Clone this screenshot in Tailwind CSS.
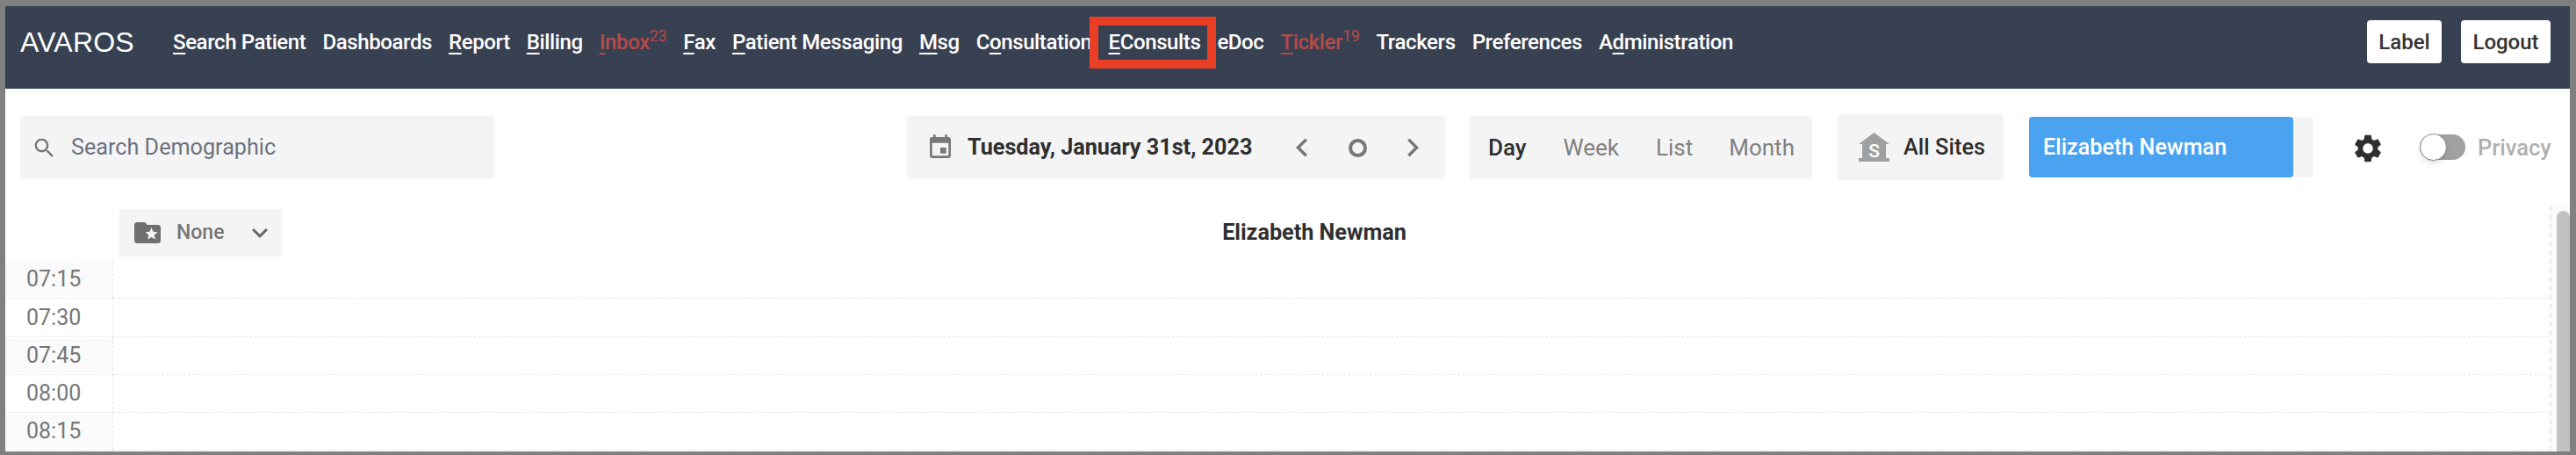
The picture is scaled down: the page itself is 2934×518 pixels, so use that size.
<!doctype html>
<html>
<head>
<meta charset="utf-8">
<script src="https://cdn.jsdelivr.net/npm/@tailwindcss/browser@4"></script>
</head>
<body class="m-0 overflow-hidden bg-[#808080] font-['Roboto',sans-serif]">
<div class="h-[518px] w-[2934px] pt-[7px] pr-[7px] pb-[4px] pl-[6px]">
<div class="flex h-full flex-col overflow-hidden bg-white">
  <header class="relative flex h-[94px] shrink-0 items-center bg-[#384152] pb-[13px] pl-[17px] pr-[22px] text-white">
    <span class="mr-[44px] w-[130px] font-['Liberation_Sans',sans-serif] text-[32px] leading-none tracking-[0.2px]">AVAROS</span>
    <nav class="flex gap-[19px] text-[24px] font-medium leading-none tracking-[-0.39px]">
      <a class="whitespace-nowrap"><u class="underline-offset-4">S</u>earch Patient</a>
      <a class="whitespace-nowrap">Dashboards</a>
      <a class="whitespace-nowrap"><u class="underline-offset-4">R</u>eport</a>
      <a class="whitespace-nowrap"><u class="underline-offset-4">B</u>illing</a>
      <a class="whitespace-nowrap text-[#b84a4a]"><u class="underline-offset-4">I</u>nbox<sup class="text-[18px] font-normal">23</sup></a>
      <a class="whitespace-nowrap"><u class="underline-offset-4">F</u>ax</a>
      <a class="whitespace-nowrap"><u class="underline-offset-4">P</u>atient Messaging</a>
      <a class="whitespace-nowrap"><u class="underline-offset-4">M</u>sg</a>
      <a class="whitespace-nowrap">C<u class="underline-offset-4">o</u>nsultation</a>
      <a class="whitespace-nowrap"><u class="underline-offset-4">E</u>Consults</a>
      <a class="whitespace-nowrap">eDoc</a>
      <a class="whitespace-nowrap text-[#b84a4a]"><u class="underline-offset-4">T</u>ickler<sup class="text-[18px] font-normal">19</sup></a>
      <a class="whitespace-nowrap">Trackers</a>
      <a class="whitespace-nowrap">Preferences</a>
      <a class="whitespace-nowrap">A<u class="underline-offset-4">d</u>ministration</a>
    </nav>
    <div class="ml-auto flex gap-[22px] text-[24px] font-medium text-[#333]">
      <button class="h-[49px] w-[85px] rounded-[4px] bg-white">Label</button>
      <button class="h-[49px] w-[102px] rounded-[4px] bg-white">Logout</button>
    </div>
    <div class="absolute left-[1235px] top-[12px] h-[59px] w-[144px] border-[10px] border-[#ea3f24]"></div>
  </header>

  <div class="flex h-[133px] shrink-0 items-start pl-[17px] pt-[31px]">
    <div class="flex h-[72px] w-[540px] items-center rounded-[4px] bg-[#f4f4f4] pl-[13px] text-[25.2px] text-[#6b7280]">
      <svg class="h-[29px] w-[29px] fill-[#777]" viewBox="0 0 24 24"><path d="M15.5 14h-.79l-.28-.27C15.41 12.59 16 11.11 16 9.5 16 5.91 13.09 3 9.5 3S3 5.91 3 9.5 5.91 16 9.5 16c1.61 0 3.09-.59 4.23-1.57l.27.28v.79l5 4.99L20.49 19l-4.99-5zm-6 0C7.01 14 5 11.99 5 9.5S7.01 5 9.5 5 14 7.01 14 9.5 11.99 14 9.5 14z"/></svg>
      <span class="ml-[16px]">Search Demographic</span>
    </div>
    <div class="ml-[470px] flex h-[72px] w-[613px] items-center rounded-[4px] bg-[#f4f4f4] pl-[22px]">
      <svg class="h-[32px] w-[32px] fill-[#777]" viewBox="0 0 24 24"><path d="M17 12h-5v5h5v-5zM16 1v2H8V1H6v2H5c-1.11 0-1.99.9-1.99 2L3 19c0 1.1.89 2 2 2h14c1.1 0 2-.9 2-2V5c0-1.1-.9-2-2-2h-1V1h-2zm3 18H5V8h14v11z"/></svg>
      <span class="ml-[15px] w-[354px] whitespace-nowrap text-[25.2px] font-bold text-[#2f2f2f]">Tuesday, January 31st, 2023</span>
      <svg class="ml-[6px] h-[42px] w-[42px] fill-[#777]" viewBox="0 0 24 24"><path d="M15.41 7.41L14 6l-6 6 6 6 1.41-1.41L10.83 12z"/></svg>
      <div class="ml-[32px] h-[21px] w-[21px] rounded-full border-[4px] border-[#777]"></div>
      <svg class="ml-[31px] h-[42px] w-[42px] fill-[#777]" viewBox="0 0 24 24"><path d="M10 6L8.59 7.41 13.17 12l-4.58 4.59L10 18l6-6z"/></svg>
    </div>
    <div class="ml-[28px] flex h-[72px] w-[390px] items-center rounded-[4px] bg-[#f4f4f4] pl-[21px] text-[26px] text-[#808080]">
      <span class="font-medium text-[#2f2f2f]">Day</span>
      <span class="ml-[42px]">Week</span>
      <span class="ml-[42px]">List</span>
      <span class="ml-[41px]">Month</span>
    </div>
    <div class="-mt-[2px] ml-[29px] flex h-[75px] w-[189px] items-center rounded-[4px] bg-[#f4f4f4] pl-[24px] text-[25.4px] font-medium text-[#2f2f2f]">
      <svg class="h-[33px] w-[35px]" viewBox="0 0 35 33"><path class="fill-[#a0a0a0]" d="M17.5 0L35 13H31V29H35V33H0V29H4V13H0Z"/><text x="17.5" y="28" text-anchor="middle" font-family="Roboto" font-size="21" font-weight="500" fill="#ffffff">S</text></svg>
      <span class="ml-[16px]">All Sites</span>
    </div>
    <div class="ml-[29px] mt-[1px] flex h-[69px] w-[324px] rounded-[4px] bg-[#f4f4f4]">
      <div class="flex h-full w-[301px] items-center rounded-[4px] bg-[#4aa3f0] pl-[16px] text-[25.2px] font-medium text-white">Elizabeth Newman</div>
    </div>
    <svg class="ml-[43px] mt-[18px] h-[38px] w-[38px] fill-[#2f2f2f]" viewBox="0 0 24 24"><path d="M19.14 12.94c.04-.3.06-.61.06-.94 0-.32-.02-.64-.07-.94l2.03-1.58c.18-.14.23-.41.12-.61l-1.92-3.32c-.12-.22-.37-.29-.59-.22l-2.39.96c-.5-.38-1.03-.7-1.62-.94l-.36-2.54c-.04-.24-.24-.41-.48-.41h-3.84c-.24 0-.43.17-.47.41l-.36 2.54c-.59.24-1.13.57-1.62.94l-2.39-.96c-.22-.08-.47 0-.59.22L2.74 8.87c-.12.21-.08.47.12.61l2.03 1.58c-.05.3-.09.63-.09.94s.02.64.07.94l-2.03 1.58c-.18.14-.23.41-.12.61l1.92 3.32c.12.22.37.29.59.22l2.39-.96c.5.38 1.03.7 1.62.94l.36 2.54c.05.24.24.41.48.41h3.84c.24 0 .44-.17.47-.41l.36-2.54c.59-.24 1.13-.56 1.62-.94l2.39.96c.22.08.47 0 .59-.22l1.92-3.32c.12-.22.07-.47-.12-.61l-2.01-1.58zM12 15.6c-1.98 0-3.6-1.62-3.6-3.6s1.62-3.6 3.6-3.6 3.6 1.62 3.6 3.6-1.62 3.6-3.6 3.6z"/></svg>
    <div class="relative ml-[40px] mt-[21px] h-[29px] w-[52px] rounded-full bg-[#a0a0a0]">
      <div class="absolute -top-[1px] left-0 h-[31px] w-[31px] rounded-full border border-[#888] bg-white shadow-md"></div>
    </div>
    <span class="ml-[14px] mt-[20px] text-[25.5px] font-medium leading-[32px] text-[#b0b0b0]">Privacy</span>
  </div>

  <div class="flex min-h-0 flex-1">
    <div class="min-w-0 flex-1 border-r-2 border-dashed border-[#e8e8e8]">
      <div class="flex h-[63px] items-start">
        <div class="ml-[130px] mt-[4px] flex h-[54px] w-[185px] shrink-0 items-center bg-[#f4f4f4] pl-[17px] text-[23px] font-medium text-[#777]">
          <svg class="h-[36px] w-[36px] -ml-[3px] fill-[#6f6f6f]" viewBox="0 0 24 24"><path d="M20 6h-8l-2-2H4c-1.1 0-2 .9-2 2v12c0 1.1.9 2 2 2h16c1.1 0 2-.9 2-2V8c0-1.1-.9-2-2-2zm-2.06 11L15 15.28 12.06 17l.78-3.33-2.59-2.24 3.41-.29L15 8l1.34 3.14 3.41.29-2.59 2.24.78 3.33z"/></svg>
          <span class="ml-[15px]">None</span>
          <svg class="ml-[22px] h-[36px] w-[36px] fill-[#666]" viewBox="0 0 24 24"><path d="M16.59 8.59L12 13.17 7.41 8.59 6 10l6 6 6-6z"/></svg>
        </div>
        <div class="mt-[15px] w-[2352px] shrink-0 text-center text-[25.2px] font-bold leading-[32px] text-[#2f2f2f]">Elizabeth Newman</div>
      </div>
      <div class="grid grid-cols-[123px_1fr] auto-rows-[43.25px] text-[25px] text-[#777]">
        <div class="flex items-center border-r border-b border-dashed border-[#e6e6e6]"><span class="flex h-[38px] w-full items-center bg-[#fafafa] pl-[24px]">07:15</span></div><div class="border-b border-dashed border-[#e6e6e6]"></div>
        <div class="flex items-center border-r border-b border-dashed border-[#e6e6e6] pl-[24px]"><span>07:30</span></div><div class="border-b border-dashed border-[#e6e6e6]"></div>
        <div class="flex items-center border-r border-b border-dashed border-[#e6e6e6]"><span class="flex h-[38px] w-full items-center bg-[#fafafa] pl-[24px]">07:45</span></div><div class="border-b border-dashed border-[#e6e6e6]"></div>
        <div class="flex items-center border-r border-b border-dashed border-[#e6e6e6] pl-[24px]"><span>08:00</span></div><div class="border-b border-dashed border-[#e6e6e6]"></div>
        <div class="flex items-center border-r border-b border-dashed border-[#e6e6e6]"><span class="flex h-[38px] w-full items-center bg-[#fafafa] pl-[24px]">08:15</span></div><div class="border-b border-dashed border-[#e6e6e6]"></div>
      </div>
    </div>
    <div class="w-[21px] shrink-0 bg-[#fafafa] pl-[6px] pt-[6px]">
      <div class="h-[300px] rounded-t-full bg-[#c1c1c1]"></div>
    </div>
  </div>
</div>
</div>
</body>
</html>
